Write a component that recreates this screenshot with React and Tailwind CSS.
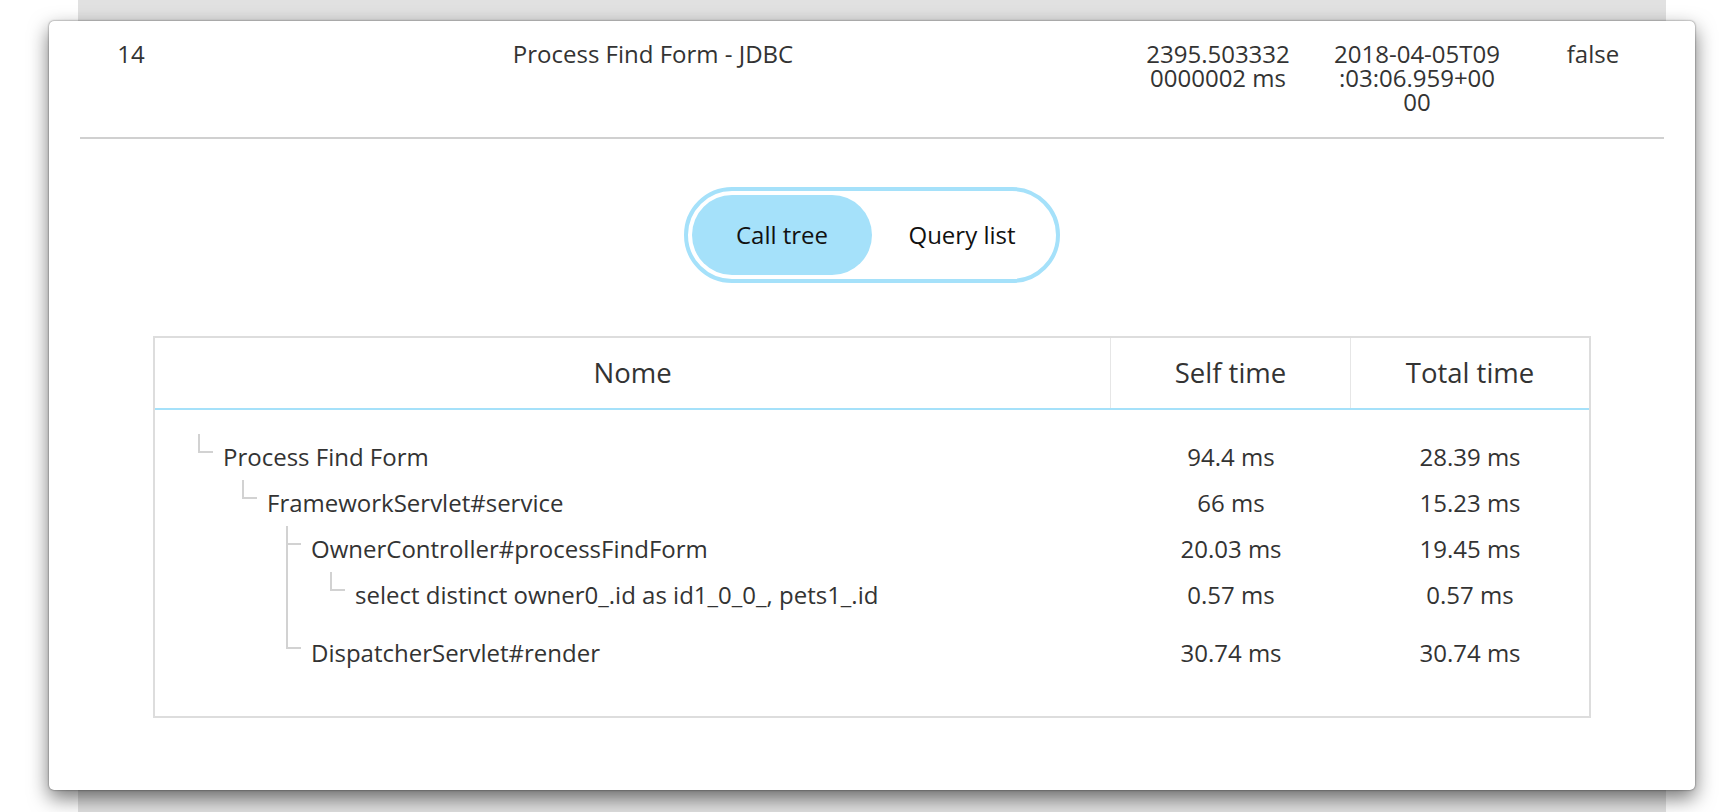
import React from 'react';

const rows = [
  { name: 'Process Find Form', self: '94.4 ms', total: '28.39 ms', guides: [], last: true },
  { name: 'FrameworkServlet#service', self: '66 ms', total: '15.23 ms', guides: [false], last: true },
  { name: 'OwnerController#processFindForm', self: '20.03 ms', total: '19.45 ms', guides: [false, false], last: false },
  { name: 'select distinct owner0_.id as id1_0_0_, pets1_.id', self: '0.57 ms', total: '0.57 ms', guides: [false, false, true], last: true, extra: true },
  { name: 'DispatcherServlet#render', self: '30.74 ms', total: '30.74 ms', guides: [false, false], last: true },
];

function TreeRow({ row }) {
  return (
    <div className={`grid grid-cols-[956px_240px_1fr] ${row.extra ? 'h-[58px]' : 'h-[46px]'}`}>
      <div className="flex pl-[43px]">
        {row.guides.map((g, i) => (
          <div key={i} className={`w-[44px] shrink-0 ${g ? 'border-l-2 border-[#d2d2d2]' : ''}`} />
        ))}
        {row.last ? (
          <div className="w-[25px] shrink-0">
            <div className="h-[19px] w-[15px] border-l-2 border-b-2 border-[#d2d2d2]" />
          </div>
        ) : (
          <div className="w-[25px] shrink-0 border-l-2 border-[#d2d2d2]">
            <div className="h-[19px] w-[13px] border-b-2 border-[#d2d2d2]" />
          </div>
        )}
        <div className="leading-[46px] whitespace-nowrap">{row.name}</div>
      </div>
      <div className="text-center leading-[46px]">{row.self}</div>
      <div className="text-center leading-[46px]">{row.total}</div>
    </div>
  );
}

export default function App() {
  return (
    <div className="w-[1732px] h-[812px] bg-white overflow-hidden font-['Open_Sans',sans-serif] text-[#333]">
      {/* gray page behind the modal */}
      <div className="ml-[78px] w-[1588px] h-full bg-[#e1e1e1] pt-[21px]">
        {/* modal card */}
        <div className="-ml-[29px] w-[1646px] bg-white rounded-[5px] shadow-[0_8px_20px_rgba(0,0,0,0.55),0_0_2px_rgba(0,0,0,0.6)] px-[31px] pt-[21px] pb-[72px]">
          {/* selected transaction row */}
          <div className="flex text-[24px] leading-[24px] text-center">
            <div className="w-[102px]">14</div>
            <div className="w-[942px]">Process Find Form - JDBC</div>
            <div className="w-[188px] px-[19px]">
              <div>2395.503332</div>
              <div>0000002 ms</div>
            </div>
            <div className="w-[210px] px-[21px]">
              <div>2018-04-05T09</div>
              <div>:03:06.959+00</div>
              <div>00</div>
            </div>
            <div className="flex-1">false</div>
          </div>
          <div className="mt-[23px] h-[2px] bg-[#d0d0d0]" />

          {/* view switch */}
          <div className="mt-[48px] flex justify-center">
            <div className="flex rounded-full border-4 border-[#a5e1fa] p-[4px] text-[24px] text-[#111]">
              <button className="w-[180px] h-[80px] rounded-full bg-[#a5e1fa] flex items-center justify-center">Call tree</button>
              <button className="w-[180px] h-[80px] rounded-full flex items-center justify-center">Query list</button>
            </div>
          </div>

          {/* call tree table */}
          <div className="mt-[53px] mx-auto w-[1438px] border-2 border-[#dddddd]">
            <div className="grid grid-cols-[956px_240px_1fr] h-[72px] border-b-2 border-[#a5e1fa] text-[27.5px]">
              <div className="flex items-center justify-center border-r border-[#e6e6e6]">Nome</div>
              <div className="flex items-center justify-center border-r border-[#e6e6e6]">Self time</div>
              <div className="flex items-center justify-center">Total time</div>
            </div>
            <div className="pt-[24px] pb-[40px] text-[24px]">
              {rows.map((r) => (
                <TreeRow key={r.name} row={r} />
              ))}
            </div>
          </div>
        </div>
      </div>
    </div>
  );
}
